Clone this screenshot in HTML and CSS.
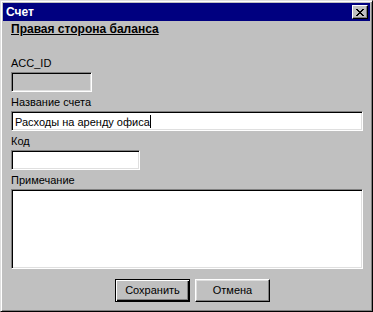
FILE: index.html
```html
<!DOCTYPE html>
<html lang="ru">

<head>
    <meta charset="UTF-8">
    <title>Счет</title>
    <link rel="stylesheet" href="styles.css">
</head>

<body>
    <!-- Dialog window -->
    <div class="window">
        <div class="titlebar">
            <span class="title">Счет</span>
            <div class="close-btn">
                <svg width="8" height="7" viewBox="0 0 8 7" shape-rendering="crispEdges">
                    <rect x="0" y="0" width="2" height="1" />
                    <rect x="6" y="0" width="2" height="1" />
                    <rect x="1" y="1" width="2" height="1" />
                    <rect x="5" y="1" width="2" height="1" />
                    <rect x="2" y="2" width="4" height="1" />
                    <rect x="3" y="3" width="2" height="1" />
                    <rect x="2" y="4" width="4" height="1" />
                    <rect x="1" y="5" width="2" height="1" />
                    <rect x="5" y="5" width="2" height="1" />
                    <rect x="0" y="6" width="2" height="1" />
                    <rect x="6" y="6" width="2" height="1" />
                </svg>
            </div>
        </div>

        <div class="content">
            <div class="heading">Правая сторона баланса</div>

            <div class="label first">ACC_ID</div>
            <div class="field disabled small"></div>

            <div class="label">Название счета</div>
            <div class="field">Расходы на аренду офиса<span class="caret"></span></div>

            <div class="label">Код</div>
            <div class="field medium"></div>

            <div class="label">Примечание</div>
            <div class="field memo"></div>

            <div class="buttons">
                <div class="btn default"><span>Сохранить</span></div>
                <div class="btn"><span>Отмена</span></div>
            </div>
        </div>
    </div>
</body>

</html>
```

FILE: styles.css
```css
/* Basic styling */
body {
    margin: 0;
    padding: 0;
    font-family: "Liberation Sans", Arial, sans-serif;
    font-size: 11px;
    color: black;
    background: #c0c0c0;
}

/* Window frame (raised, two bevel lines) */
.window {
    width: 373px;
    height: 312px;
    box-sizing: border-box;
    background: #c0c0c0;
    border: 1px solid;
    border-color: #dfdfdf #000000 #000000 #dfdfdf;
    box-shadow: inset 1px 1px 0 #ffffff, inset -1px -1px 0 #808080;
    padding: 2px;
    display: flex;
    flex-direction: column;
}

.titlebar {
    height: 18px;
    background: #000080;
    color: white;
    display: flex;
    align-items: center;
    justify-content: space-between;
    padding: 0 2px 0 3px;
}

.title {
    font-weight: bold;
    font-size: 12px;
    line-height: 13px;
}

.close-btn {
    width: 16px;
    height: 14px;
    box-sizing: border-box;
    background: #c0c0c0;
    border: 1px solid;
    border-color: #ffffff #000000 #000000 #ffffff;
    box-shadow: inset -1px -1px 0 #808080;
    display: flex;
    align-items: center;
    justify-content: center;
    padding-right: 1px;
}

.close-btn svg {
    display: block;
}

.content {
    padding: 2px 7px 0 8px;
    display: flex;
    flex-direction: column;
    align-items: flex-start;
}

.heading {
    font-weight: bold;
    font-size: 12px;
    text-decoration: underline;
    line-height: 13px;
}

.label {
    line-height: 13px;
    margin-top: 4px;
    margin-bottom: 2px;
}

.label.first {
    margin-top: 21px;
}

/* Sunken edit box */
.field {
    align-self: stretch;
    height: 20px;
    box-sizing: border-box;
    background: white;
    border: 1px solid;
    border-color: #808080 #ffffff #ffffff #808080;
    box-shadow: inset 1px 1px 0 #000000, inset -1px -1px 0 #dfdfdf;
    padding: 2px 3px;
    line-height: 16px;
    white-space: nowrap;
}

.field.disabled {
    background: #c0c0c0;
}

.field.small {
    align-self: flex-start;
    width: 81px;
}

.field.medium {
    align-self: flex-start;
    width: 129px;
}

.field.memo {
    height: 80px;
}

.caret {
    display: inline-block;
    width: 1px;
    height: 13px;
    background: black;
    vertical-align: -2px;
}

.buttons {
    display: flex;
    gap: 5px;
    margin-top: 10px;
    padding-left: 104px;
}

/* Raised push button */
.btn {
    width: 75px;
    height: 23px;
    box-sizing: border-box;
    border: 1px solid;
    border-color: #ffffff #000000 #000000 #ffffff;
    box-shadow: inset -1px -1px 0 #808080, inset 1px 1px 0 #dfdfdf;
    display: flex;
    align-items: center;
    justify-content: center;
    line-height: 13px;
}

.btn.default {
    border: 1px solid #000000;
    box-shadow: inset 1px 1px 0 #ffffff, inset -1px -1px 0 #000000, inset -2px -2px 0 #808080;
}
```
